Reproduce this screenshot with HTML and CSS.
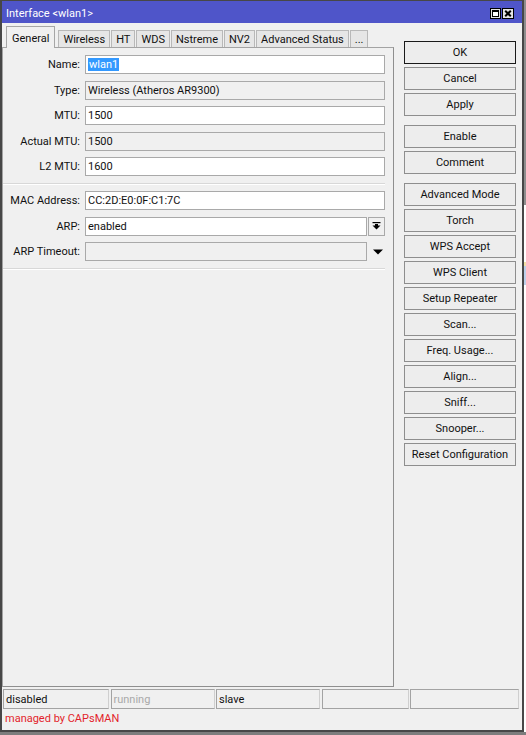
FILE: index.html
```html
<!DOCTYPE html>
<html>
<head>
<meta charset="utf-8">
<link rel="stylesheet" href="styles.css">
</head>
<body>
<div class="screen">
  <div class="window">
    <div class="titlebar">
      <span class="title">Interface &lt;wlan1&gt;</span>
      <div class="tb-buttons">
        <span class="tb-btn">
          <svg width="11" height="11" viewBox="0 0 11 11"><rect x="0.5" y="0.5" width="10" height="10" fill="#e4e4e4" stroke="#000"/><rect x="2.5" y="2.5" width="6" height="6" fill="#fff" stroke="#000"/><rect x="2" y="2" width="7" height="2" fill="#000"/></svg>
        </span>
        <span class="tb-btn">
          <svg width="12" height="11" viewBox="0 0 12 11"><rect x="0.5" y="0.5" width="11" height="10" fill="#e4e4e4" stroke="#000"/><path d="M3.2 2.7 L8.8 8.3 M8.8 2.7 L3.2 8.3" stroke="#000" stroke-width="2"/></svg>
        </span>
      </div>
    </div>
    <div class="main">
      <div class="left">
        <div class="tabs">
          <div class="tab active">General</div>
          <div class="tab">Wireless</div>
          <div class="tab">HT</div>
          <div class="tab">WDS</div>
          <div class="tab">Nstreme</div>
          <div class="tab">NV2</div>
          <div class="tab">Advanced Status</div>
          <div class="tab">...</div>
        </div>
        <div class="panel">
          <div class="form">
            <div class="row"><span class="lbl">Name:</span><div class="field"><span class="sel">wlan1</span></div></div>
            <div class="row"><span class="lbl">Type:</span><div class="field ro">Wireless (Atheros AR9300)</div></div>
            <div class="row"><span class="lbl">MTU:</span><div class="field">1500</div></div>
            <div class="row"><span class="lbl">Actual MTU:</span><div class="field ro">1500</div></div>
            <div class="row"><span class="lbl">L2 MTU:</span><div class="field">1600</div></div>
            <div class="sep"></div>
            <div class="row"><span class="lbl">MAC Address:</span><div class="field">CC:2D:E0:0F:C1:7C</div></div>
            <div class="row"><span class="lbl">ARP:</span>
              <div class="combo">
                <div class="field">enabled</div>
                <div class="drop-btn"><svg width="9" height="8" viewBox="0 0 9 8"><rect x="0.5" y="0" width="8" height="1.2" fill="#000"/><rect x="3" y="2" width="3" height="2" fill="#000"/><polygon points="0.5,3.5 8.5,3.5 4.5,7.5" fill="#000"/></svg></div>
              </div>
            </div>
            <div class="row"><span class="lbl">ARP Timeout:</span>
              <div class="combo">
                <div class="field ro"></div>
                <div class="drop-plain"><svg width="10" height="6" viewBox="0 0 10 6"><polygon points="0,0.5 10,0.5 5,5.5" fill="#000"/></svg></div>
              </div>
            </div>
            <div class="sep"></div>
          </div>
        </div>
      </div>
      <div class="actions">
        <div class="btn default">OK</div>
        <div class="btn">Cancel</div>
        <div class="btn">Apply</div>
        <div class="btn grp">Enable</div>
        <div class="btn">Comment</div>
        <div class="btn grp">Advanced Mode</div>
        <div class="btn">Torch</div>
        <div class="btn">WPS Accept</div>
        <div class="btn">WPS Client</div>
        <div class="btn">Setup Repeater</div>
        <div class="btn">Scan...</div>
        <div class="btn">Freq. Usage...</div>
        <div class="btn">Align...</div>
        <div class="btn">Sniff...</div>
        <div class="btn">Snooper...</div>
        <div class="btn">Reset Configuration</div>
      </div>
    </div>
    <div class="status">
      <div class="cell">disabled</div>
      <div class="cell dim">running</div>
      <div class="cell">slave</div>
      <div class="cell"></div>
      <div class="cell"></div>
    </div>
    <div class="managed">managed by CAPsMAN</div>
  </div>
  <div class="strip"></div>
</div>
</body>
</html>
```
FILE: styles.css
```css
html, body {
  margin: 0;
  padding: 0;
}
body {
  width: 526px;
  height: 735px;
  overflow: hidden;
  background: #7d7d7d;
  font-family: Roboto, "Liberation Sans", sans-serif;
  font-size: 11px;
  color: #111;
}
.screen {
  display: flex;
  align-items: flex-start;
  height: 735px;
}
.window {
  flex: none;
  width: 524px;
  height: 732px;
  box-sizing: border-box;
  border: 2px solid #474747;
  border-top: 1px solid #474747;
  background: #f0f0f0;
  display: flex;
  flex-direction: column;
}
.strip {
  flex: 1;
  height: 735px;
  background: linear-gradient(to bottom, #8e8e8e 0, #8e8e8e 205px, #ffffff 205px, #ffffff 262px, #f1e1a6 262px, #f1e1a6 266px, #bcd0ea 266px, #bcd0ea 285px, #ffffff 285px, #ffffff 732px, #7d7d7d 732px);
}

/* title bar */
.titlebar {
  flex: none;
  height: 22px;
  background: #4f55c9;
  color: #fff;
  display: flex;
  align-items: center;
  justify-content: space-between;
  padding: 0 8px 0 4px;
}
.title {
  line-height: 1;
  padding-top: 2px;
}
.tb-buttons {
  display: flex;
  gap: 1px;
  margin-top: 3px;
}
.tb-btn {
  display: flex;
}

/* main */
.main {
  flex: none;
  height: 664px;
  display: flex;
  gap: 10px;
  padding-right: 6px;
}
.left {
  width: 392px;
  display: flex;
  flex-direction: column;
}
.tabs {
  flex: none;
  height: 24px;
  display: flex;
  align-items: flex-end;
  gap: 1px;
  padding-left: 4px;
  position: relative;
  z-index: 1;
}
.tab {
  height: 17px;
  box-sizing: border-box;
  padding: 1px 4px 0;
  border: 1px solid #b8b8b8;
  border-bottom: none;
  background: #e6e6e6;
  display: flex;
  align-items: center;
  white-space: nowrap;
}
.tab.active {
  height: 22px;
  margin-bottom: -1px;
  margin-right: 2px;
  padding: 2px 5px 0;
  background: #f0f0f0;
  border-color: #a6a6a6;
}
.panel {
  flex: 1;
  box-sizing: border-box;
  border: 1px solid #a3a3a3;
  border-right-color: #8f8f8f;
  border-bottom-color: #8f8f8f;
  padding-top: 7px;
}
.form {
  width: 382px;
  display: flex;
  flex-direction: column;
  gap: 6.5px;
}
.row {
  height: 19px;
  display: flex;
  align-items: center;
}
.lbl {
  flex: none;
  width: 77px;
  margin-right: 5px;
  text-align: right;
  white-space: nowrap;
}
.field {
  width: 300px;
  height: 19px;
  box-sizing: border-box;
  border: 1px solid #a9a9a9;
  background: #fff;
  padding-left: 2px;
  display: flex;
  align-items: center;
  white-space: nowrap;
  overflow: hidden;
}
.field.ro {
  background: #f0f0f0;
}
.sel {
  background: #3399ff;
  color: #fff;
  padding: 0 1px;
  line-height: 13px;
}
.combo {
  width: 300px;
  display: flex;
  gap: 1px;
}
.combo .field {
  flex: 1;
  width: auto;
}
.drop-btn {
  flex: none;
  width: 17px;
  height: 19px;
  box-sizing: border-box;
  border: 1px solid #a9a9a9;
  background: #f0f0f0;
  display: flex;
  align-items: center;
  justify-content: center;
}
.drop-plain {
  flex: none;
  width: 17px;
  height: 19px;
  display: flex;
  align-items: center;
  justify-content: center;
  padding-left: 2px;
  box-sizing: border-box;
}
.sep {
  height: 0;
  border-top: 1px solid #d8d8d8;
  border-bottom: 1px solid #ffffff;
}

/* action buttons */
.actions {
  flex: none;
  width: 112px;
  display: flex;
  flex-direction: column;
  gap: 3px;
  padding-top: 18px;
}
.btn {
  height: 23px;
  box-sizing: border-box;
  border: 1px solid #8e8e8e;
  background: #ededed;
  display: flex;
  align-items: center;
  justify-content: center;
  white-space: nowrap;
}
.btn.default {
  border-color: #1a1a1a;
}
.btn.grp {
  margin-top: 6px;
}

/* status */
.status {
  flex: none;
  height: 20px;
  margin-top: 2px;
  padding-left: 1px;
  display: grid;
  grid-template-columns: 106px 104px 104px 87px 109px;
  column-gap: 1.5px;
}
.cell {
  box-sizing: border-box;
  border: 1px solid #a3a3a3;
  border-right-color: #cfcfcf;
  padding-left: 2px;
  display: flex;
  align-items: center;
}
.cell.dim {
  color: #a9a9a9;
}
.managed {
  flex: none;
  height: 18px;
  padding-left: 3px;
  display: flex;
  align-items: center;
  color: #e31f2b;
}
```
